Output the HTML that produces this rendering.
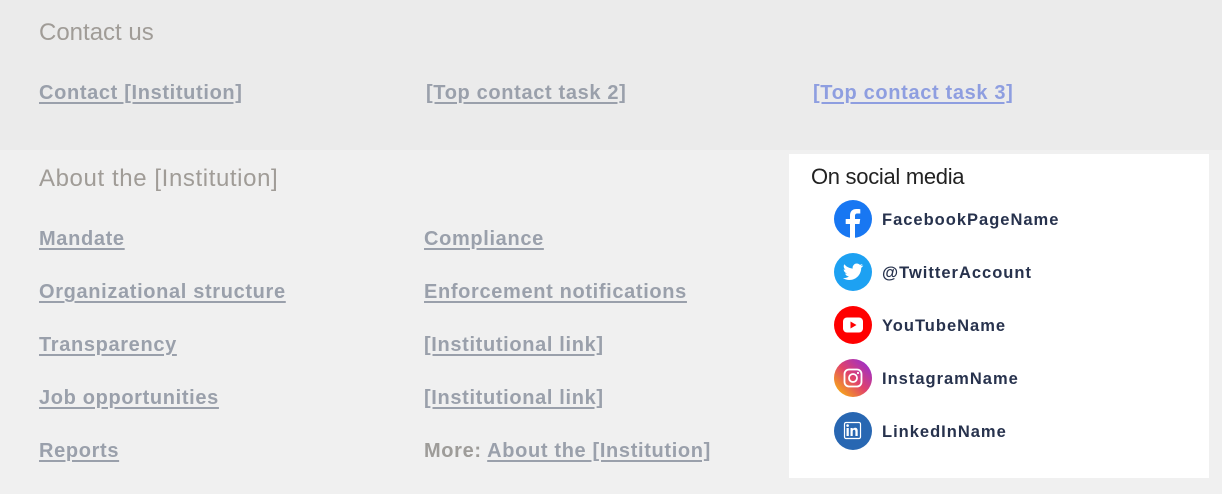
<!DOCTYPE html>
<html><head><meta charset="utf-8"><style>
*{margin:0;padding:0;box-sizing:border-box}
body{width:1222px;height:494px;background:#f0f0f0;font-family:"Liberation Sans",sans-serif;position:relative;overflow:hidden}
.top{position:absolute;left:0;top:0;width:1222px;height:150px;background:#ebebeb}
.h{position:absolute;font-size:24px;color:#a09c97;letter-spacing:0.6px}
a{position:absolute;font-size:20px;font-weight:bold;color:#9aa0ab;text-decoration:underline;text-underline-offset:3px;white-space:nowrap;letter-spacing:0.65px}
a.b{color:#8e9ee0}
.m{position:absolute;font-size:20px;font-weight:bold;color:#9e9c99;white-space:nowrap;letter-spacing:0.65px}
.m a{position:static}
.box{position:absolute;left:789px;top:154px;width:420px;height:324px;background:#fff}
.sh{position:absolute;left:22px;top:10px;font-size:22px;color:#222;letter-spacing:-0.3px}
.it{position:absolute;left:45px;height:38px;display:flex;align-items:center}
.it svg{width:38px;height:38px;margin-right:10px}
.it span{font-size:16.5px;font-weight:bold;color:#27324d;letter-spacing:1px;position:relative;top:1px}
</style></head><body>
<div class="top"></div>
<div class="h" style="left:39px;top:19px;letter-spacing:0">Contact us</div>
<a style="left:39px;top:82px">Contact [Institution]</a>
<a style="left:426px;top:82px">[Top contact task 2]</a>
<a class="b" style="left:813px;top:82px">[Top contact task 3]</a>
<div class="h" style="left:39px;top:165px">About the [Institution]</div>
<a style="left:39px;top:228px">Mandate</a>
<a style="left:39px;top:281px">Organizational structure</a>
<a style="left:39px;top:334px">Transparency</a>
<a style="left:39px;top:387px">Job opportunities</a>
<a style="left:39px;top:440px">Reports</a>
<a style="left:424px;top:228px">Compliance</a>
<a style="left:424px;top:281px">Enforcement notifications</a>
<a style="left:424px;top:334px">[Institutional link]</a>
<a style="left:424px;top:387px">[Institutional link]</a>
<div class="m" style="left:424px;top:440px">More: <a>About the [Institution]</a></div>
<div class="box">
<div class="sh">On social media</div>
<div class="it" style="top:46px"><svg viewBox="0 0 38 38"><circle cx="19" cy="19" r="19" fill="#1877f2"/><path d="M21 38V24h4.5l.7-5H21v-3c0-1.5.5-2.5 2.6-2.5h2.7V9.2c-.5-.1-2-.2-3.9-.2-3.9 0-6.4 2.3-6.4 6.6V19h-4.3v5H16v14z" fill="#fff"/></svg><span>FacebookPageName</span></div>
<div class="it" style="top:99px"><svg viewBox="0 0 38 38"><circle cx="19" cy="19" r="19" fill="#1da1f2"/><path d="M29 12.5c-.7.3-1.5.5-2.3.6.8-.5 1.5-1.3 1.8-2.2-.8.5-1.700.8-2.6 1-1.6-1.7-4.3-1.8-6-.2-1.1 1-1.5 2.5-1.2 3.9-3.3-.2-6.3-1.7-8.4-4.3-1.1 1.9-.5 4.3 1.3 5.5-.7 0-1.3-.2-1.9-.5 0 2 1.4 3.7 3.3 4.1-.6.2-1.2.2-1.9.1.5 1.7 2.1 2.9 3.9 2.9-1.7 1.3-3.9 2-6.1 1.7 1.9 1.2 4.1 1.9 6.4 1.9 7.7 0 12-6.4 11.9-12.1.8-.6 1.5-1.3 2-2.1z" fill="#fff"/></svg><span>@TwitterAccount</span></div>
<div class="it" style="top:152px"><svg viewBox="0 0 38 38"><circle cx="19" cy="19" r="19" fill="#f00"/><rect x="9" y="11.5" width="20" height="15" rx="4" fill="#fff"/><path d="M16.5 15.5v7l6-3.5z" fill="#f00"/></svg><span>YouTubeName</span></div>
<div class="it" style="top:205px"><svg viewBox="0 0 38 38"><defs><linearGradient id="g" x1="0" y1="1" x2="1" y2="0"><stop offset="0" stop-color="#fdc500"/><stop offset=".5" stop-color="#e0426c"/><stop offset="1" stop-color="#8a2be2"/></linearGradient></defs><circle cx="19" cy="19" r="19" fill="url(#g)"/><rect x="10.5" y="10.5" width="17" height="17" rx="4.5" fill="none" stroke="#fff" stroke-width="1.8"/><circle cx="19" cy="19" r="4" fill="none" stroke="#fff" stroke-width="1.8"/><circle cx="24" cy="14" r="1.1" fill="#fff"/></svg><span>InstagramName</span></div>
<div class="it" style="top:258px"><svg viewBox="0 0 38 38"><circle cx="19" cy="19" r="19" fill="#2867b2"/><rect x="10.5" y="10.5" width="16" height="16" rx="1.5" fill="none" stroke="#fff" stroke-width="1.2"/><rect x="12.5" y="16" width="2.3" height="8" fill="#fff"/><circle cx="13.6" cy="13.6" r="1.3" fill="#fff"/><path d="M16.5 16h2.2v1.1c.5-.8 1.4-1.3 2.4-1.3 2 0 2.6 1.3 2.6 3.2V24h-2.3v-4.4c0-1-.3-1.8-1.3-1.8s-1.4.8-1.4 1.8V24h-2.2z" fill="#fff"/></svg><span>LinkedInName</span></div>
</div>
</body></html>
